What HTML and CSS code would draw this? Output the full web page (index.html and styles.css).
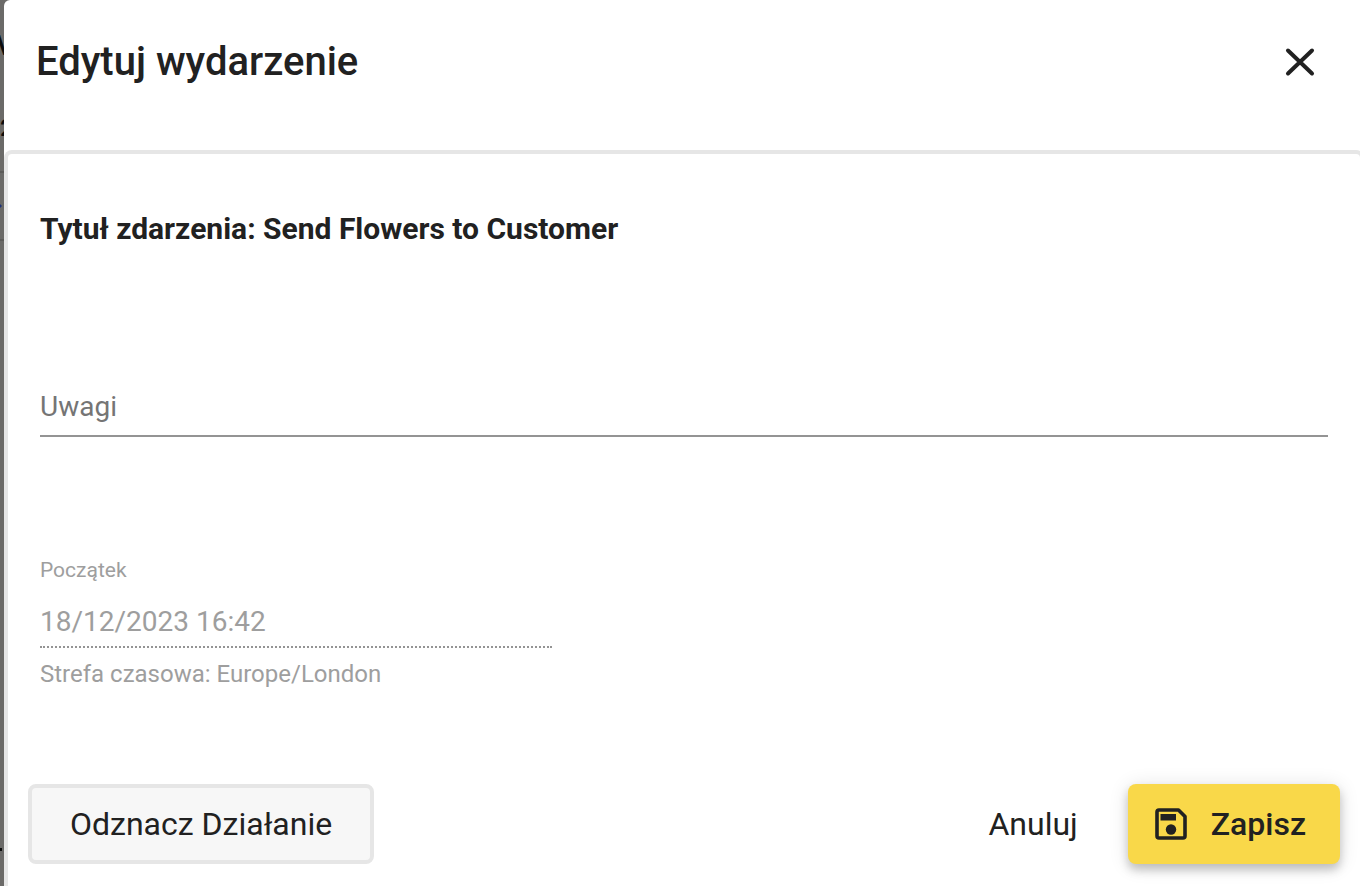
FILE: index.html
```html
<!DOCTYPE html>
<html lang="pl">
<head>
    <meta charset="UTF-8">
    <meta name="viewport" content="width=device-width, initial-scale=1.0">
    <title>Edytuj wydarzenie</title>
    <link rel="stylesheet" href="styles.css">
</head>
<body>
    <div class="page">
        <div class="backdrop" aria-hidden="true">
            <span class="behind behind-title">V</span>
            <span class="behind behind-count">2</span>
            <svg class="behind-row" viewBox="0 0 4 72">
                <path d="M0 1h4M0 69h4" stroke="#5c5b59" stroke-width="2"/>
                <path d="M0 33l2 2-2 2z" fill="#1d3279"/>
            </svg>
            <span class="behind-dot"></span>
        </div>

        <div class="dialog" role="dialog" aria-labelledby="dialog-title">
            <div class="dialog-header">
                <h1 class="dialog-title" id="dialog-title">Edytuj wydarzenie</h1>
                <button class="btn-close" type="button" aria-label="Zamknij">
                    <svg width="48" height="48" viewBox="0 0 48 48">
                        <path d="M12 12.500L36 35.500M36 12.500L12 35.500" fill="none" stroke="#212121" stroke-width="4" stroke-linecap="round"/>
                    </svg>
                </button>
            </div>

            <form class="panel">
                <div class="fields">
                    <h2 class="event-title">Tytuł zdarzenia: Send Flowers to Customer</h2>

                    <input class="input input-notes" type="text" placeholder="Uwagi" aria-label="Uwagi">

                    <div class="field-date">
                        <label for="start">Początek</label>
                        <input class="input" id="start" type="text" value="18/12/2023 16:42" disabled>
                        <p class="hint">Strefa czasowa: Europe/London</p>
                    </div>
                </div>

                <div class="actions">
                    <button class="btn btn-outline" type="button">Odznacz Działanie</button>
                    <div class="actions-right">
                        <button class="btn btn-text" type="button">Anuluj</button>
                        <button class="btn btn-save" type="submit">
                            <svg width="32" height="32" viewBox="0 0 32 32">
                                <path d="M4 2h19.500l6.500 6.500V28a2 2 0 0 1-2 2H4a2 2 0 0 1-2-2V4a2 2 0 0 1 2-2z" fill="none" stroke="#212121" stroke-width="3.600" stroke-linejoin="round"/>
                                <path d="M5.500 6h15.500v6.500H5.500z" fill="#212121"/>
                                <circle cx="16" cy="21.500" r="5.200" fill="#212121"/>
                            </svg>
                            Zapisz
                        </button>
                    </div>
                </div>
            </form>
        </div>
    </div>
</body>
</html>
```
FILE: styles.css
```css
* {
    margin: 0;
    padding: 0;
    box-sizing: border-box;
    font-family: Roboto, sans-serif;
}

body {
    background: #6b6a68;
    color: #212121;
}

.page {
    display: flex;
    min-height: 100vh;
    overflow: hidden;
}

/* strip of the dimmed page left of the dialog */
.backdrop {
    display: flex;
    flex-direction: column;
    width: 4px;
    flex-shrink: 0;
    overflow: hidden;
}

.behind {
    color: #0d0d0d;
    font-size: 28px;
    font-weight: 500;
    line-height: 32px;
}

.behind-title {
    margin-top: 30px;
    margin-left: -4px;
}

.behind-count {
    margin-top: 50px;
    font-size: 24px;
}

.behind-row {
    width: 4px;
    height: 72px;
    margin-top: 27px;
}

.behind-dot {
    width: 2px;
    height: 3px;
    margin-top: 605px;
    background: #0d0d0d;
}

.dialog {
    flex: 1;
    display: flex;
    flex-direction: column;
    background: #fff;
    border-top-left-radius: 6px;
}

.dialog-header {
    display: flex;
    justify-content: space-between;
    align-items: center;
    padding: 36px 36px 62px 32px;
}

.dialog-title {
    font-size: 40px;
    font-weight: 500;
    line-height: 52px;
}

.btn-close {
    width: 48px;
    height: 48px;
    border: none;
    background: none;
    cursor: pointer;
}

.btn-close svg {
    display: block;
}

/* right border runs past the window edge */
.panel {
    flex: 1;
    display: flex;
    flex-direction: column;
    margin-right: -4px;
    border: 4px solid #e6e6e6;
    border-bottom: none;
    border-radius: 8px 8px 0 0;
}

.fields {
    padding: 55px 32px 0;
}

.event-title {
    margin-bottom: 134px;
    font-size: 30px;
    font-weight: 700;
    line-height: 40px;
}

.input {
    display: block;
    width: 100%;
    height: 52px;
    border: none;
    border-bottom: 2px solid #949494;
    background: none;
    color: #9e9e9e;
    font-size: 28px;
    outline: none;
}

.input::placeholder {
    color: #757575;
    opacity: 1;
}

.input:disabled {
    border-bottom-style: dotted;
}

.input-notes {
    height: 54px;
    padding-bottom: 6px;
    margin-bottom: 117px;
}

.field-date {
    width: 512px;
    max-width: 100%;
    color: #9e9e9e;
}

.field-date label {
    display: block;
    margin-bottom: 10px;
    font-size: 21px;
    line-height: 32px;
}

.hint {
    margin-top: 10px;
    font-size: 24px;
    line-height: 32px;
}

.actions {
    display: flex;
    justify-content: space-between;
    margin-top: 94px;
    padding: 0 20px 22px;
}

.actions-right {
    display: flex;
    gap: 16px;
}

.btn {
    display: flex;
    justify-content: center;
    align-items: center;
    height: 80px;
    border: none;
    border-radius: 8px;
    background: none;
    color: #212121;
    font-size: 32px;
    cursor: pointer;
}

.btn-outline {
    padding: 0 38px;
    border: 4px solid #e6e6e6;
    background: #f7f7f7;
}

.btn-text {
    padding: 0 34px;
}

.btn-save {
    gap: 24px;
    padding: 0 34px 0 27px;
    background: #f9d849;
    font-weight: 500;
    box-shadow: 0 6px 10px rgba(0, 0, 0, 0.2), 0 2px 20px rgba(0, 0, 0, 0.12);
}
```
